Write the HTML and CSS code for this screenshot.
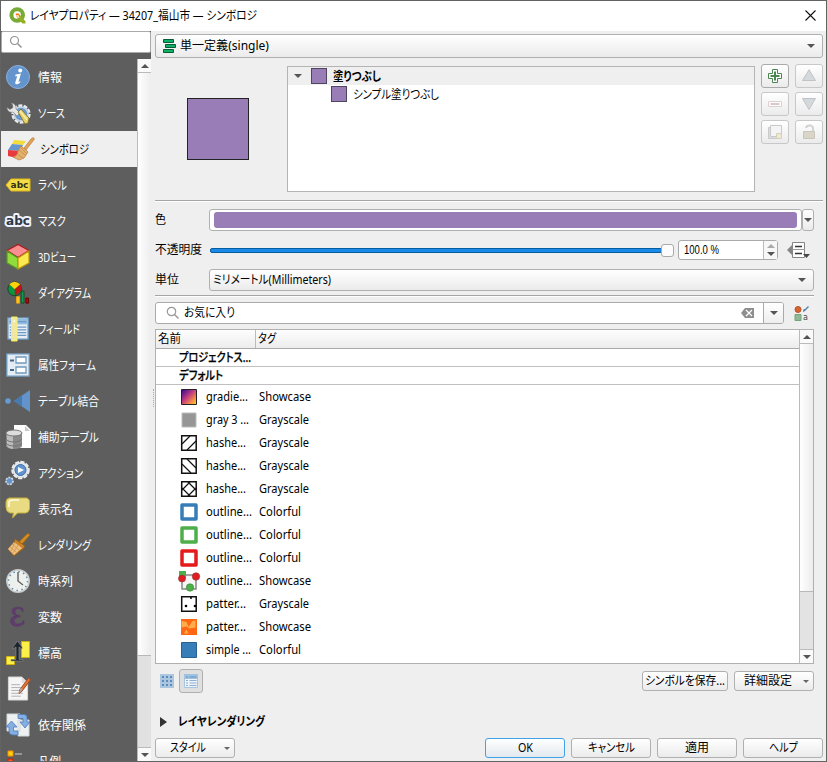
FILE: index.html
```html
<!DOCTYPE html>
<html lang="ja">
<head>
<meta charset="utf-8">
<title>レイヤプロパティ — 34207_福山市 — シンボロジ</title>
<link rel="stylesheet" href="styles.css">
</head>
<body>
<div class="window">
  <header class="titlebar">
    <svg class="logo" viewBox="0 0 18 18" width="18" height="18"><circle cx="8.2" cy="8" r="5.8" fill="none" stroke="#78aa38" stroke-width="4"/><path d="M8 8h3l5.5 6.5v2h-3L8 11z" fill="#93b023"/><path d="M6.5 6.5h3.5l1 2.5-3 1.5z" fill="#ee7913"/><path d="M7 8l2.5 0 1 3h-2z" fill="#f7d9b0"/></svg>
    <span class="fit" data-w="227">レイヤプロパティ — 34207_福山市 — シンボロジ</span>
    <svg class="close" viewBox="0 0 11 11" width="11" height="11"><path d="M.5.5l10 10M10.500.5l-10 10" stroke="#111" stroke-width="1.1"/></svg>
  </header>
  <div class="body">
    <aside class="sidebar">
      <div class="side-search"><svg viewBox="0 0 14 14" width="14" height="14"><circle cx="5.500" cy="5.500" r="4" fill="none" stroke="#949494" stroke-width="1.200"/><path d="M8.500 8.500l4 4" stroke="#949494" stroke-width="1.600"/></svg></div>
      <div class="side-main">
        <nav class="nav">
          <div class="item"><svg viewBox="0 0 24 24"><circle cx="12" cy="12" r="11.500" fill="#6394cd" stroke="#8bb1dc"/><path d="M9.500 9.500l5.500-1-2.600 8.500 2-1-.3 1.600c-2 2.300-5.600 2.500-4.800-.3l2-6.200-2 .3z" fill="#fff"/><circle cx="14.200" cy="5.500" r="2" fill="#fff"/></svg><span class="fit" data-w="24">情報</span></div>
          <div class="item"><svg viewBox="0 0 24 24"><circle cx="15" cy="13" r="8" fill="#6898d0" stroke="#e8ebee" stroke-width="3.300" stroke-dasharray="3.700 1.300"/><circle cx="15" cy="13" r="7" fill="none" stroke="#c6d0da" stroke-width="1.500"/><path d="M5 2a5 5 0 0 1 5 6l4 4-3 3-4-4C4 12 1 10 1 6.500l3 2 3-2-.5-3z" fill="#e6e7e4" stroke="#777" stroke-width=".6"/><path d="M12 11l3-3 8 9-1 5-3 1z" fill="#e3d165" stroke="#776b2f" stroke-width=".8"/><path d="M14 10l7 9" stroke="#f7edaa" stroke-width="1.500"/></svg><span class="fit" data-w="27">ソース</span></div>
          <div class="item selected"><svg viewBox="0 0 26 24" class="wide"><path d="M6 3l12 1-3 4-11-1z" fill="#f3dc38"/><path d="M4 7l11 1-3 6L0 13z" fill="#6497d0"/><path d="M0 13l13 1-4 7-9-2z" fill="#e73b3d"/><path d="M16 11l7-9q2-2 3-1t-1 3l-7 9z" fill="#dfa25a" stroke="#bd7f37" stroke-width=".7"/><path d="M13 9l7 6-4 6-5 2-6-3c4-1 5-4 5-6z" fill="#e5b16e" stroke="#c08340" stroke-width=".8"/><path d="M11 13l7 6M9 17l6 4M13 11l6 6" stroke="#c8944f"/></svg><span class="fit" data-w="49">シンボロジ</span></div>
          <div class="item"><svg viewBox="0 0 24 24"><path d="M5 6h19v12H5l-5-6z" fill="#f5dc42" stroke="#e0b41d"/><text x="13.500" y="15.300" text-anchor="middle" class="abc small">abc</text></svg><span class="fit" data-w="29">ラベル</span></div>
          <div class="item"><svg viewBox="0 0 26 24" class="maskicon"><text x="13" y="16" text-anchor="middle" class="abc outlined">abc</text></svg><span class="fit" data-w="28">マスク</span></div>
          <div class="item"><svg viewBox="0 0 24 24"><path d="M12-.5l11 6-11 7-11-7z" fill="#fa8f91" stroke="#ad191d" stroke-width="1.200"/><path d="M1 6l11 7v11L1 18z" fill="#91dc3b" stroke="#59972a" stroke-width="1.200"/><path d="M23 6l-11 7v11l11-6z" fill="#fce94f" stroke="#b99810" stroke-width="1.200"/></svg><span class="fit" data-w="38">3Dビュー</span></div>
          <div class="item"><svg viewBox="0 0 24 26"><circle cx="8.500" cy="8.500" r="7.500" fill="#069843" stroke="#193f20"/><path d="M8.500 9L2.500 3.500Q8-2 14.500 3.500z" fill="#ffd20a"/><path d="M8.500 9l6-5.500c3 4 1 10-6 12z" fill="#bd1615"/><path d="M10.500 17h3v7h-3z" fill="#fbc519" stroke="#f3a810"/><path d="M15.500 11h3v13h-3z" fill="#109c4c" stroke="#124c29"/><path d="M20.500 18.500h3V24h-3z" fill="#b60704" stroke="#620503"/></svg><span class="fit" data-w="53">ダイアグラム</span></div>
          <div class="item"><svg viewBox="0 0 24 26"><path d="M1 1h22v23H1z" fill="#e7eef6" stroke="#6695bd" stroke-width="1.500"/><path d="M2 2h20v6H2z" fill="#94bce0"/><path d="M3 5h18M3 11h18M3 14h18M3 17h18M3 20h18" stroke="#6c98c5" stroke-width="1.300"/><path d="M5 0h6v26H5z" fill="#eee7a5" stroke="#fcf54e"/><circle cx="8" cy="4.500" r="1" fill="#fff"/></svg><span class="fit" data-w="42">フィールド</span></div>
          <div class="item"><svg viewBox="0 0 24 24"><path d="M.8.8h22.400v22.400H.8z" fill="#e5edf4" stroke="#6a97bc" stroke-width="1.300"/><path d="M4 7.500h4M4 17h4" stroke="#466783" stroke-width="2"/><path d="M10 4h10v6H10zM10 14h10v6H10z" fill="#fff" stroke="#7199bc" stroke-width="1.300"/></svg><span class="fit" data-w="58">属性フォーム</span></div>
          <div class="item"><svg viewBox="0 0 24 24"><circle cx="2" cy="12" r="2.800" fill="#679bd3"/><path d="M8 12L24 1v22z" fill="#6294cb"/><path d="M8 12l8-6v12z" fill="#497aaf"/></svg><span class="fit" data-w="61">テーブル結合</span></div>
          <div class="item"><svg viewBox="0 0 24 24"><path d="M8 0h12l5 5v18H8z" fill="#fff"/><path d="M19 1v5h5z" fill="#c9c9c9"/><path d="M0 8v13c1 4 15 4 16 0V8z" fill="#888"/><path d="M1 8v13c1 2 4 3 6 3V8z" fill="#bcbcbc"/><ellipse cx="8" cy="8" rx="8" ry="3" fill="#ddd" stroke="#777"/><path d="M0 14c2 4 14 4 16 0M0 18c2 4 14 4 16 0" fill="none" stroke="#737373"/></svg><span class="fit" data-w="61">補助テーブル</span></div>
          <div class="item"><svg viewBox="0 0 24 24"><circle cx="14.500" cy="9" r="7.500" fill="#6094cf" stroke="#ecefef" stroke-width="3.500" stroke-dasharray="3.800 1.200"/><circle cx="14.500" cy="9" r="7" fill="none" stroke="#e4e7e9" stroke-width="2"/><circle cx="14.500" cy="9" r="5.500" fill="#6094cf" stroke="#4d79a9"/><path d="M12 6l6 3-6 3z" fill="#fff"/><circle cx="3.500" cy="20" r="3.500" fill="#6497d0" stroke="#d8dbe0" stroke-width="1.700" stroke-dasharray="2 1"/></svg><span class="fit" data-w="45">アクション</span></div>
          <div class="item"><svg viewBox="0 0 24 24"><path d="M3 1h18q3 1 2.500 5v6q-1 4-4 4h-8l-5 5 1-5H4q-4-1-4-6V5q0-3 3-4z" fill="#e8db82" stroke="#c4ad38"/><path d="M3 10V6q0-3 4-3h6" fill="none" stroke="#fffbe0" stroke-width="1.500"/></svg><span class="fit" data-w="35">表示名</span></div>
          <div class="item"><svg viewBox="0 0 24 24"><path d="M13 9l8-8q2-1 3 1l-8 9z" fill="#d58d1d" stroke="#9c6512" stroke-width=".7"/><path d="M9 6l10 7-2 3-3 2-6 5-6-7 6-5z" fill="#ca8326" stroke="#965d19" stroke-width=".8"/><path d="M8 9l8 6-8 7-6-6z" fill="#edc083"/><path d="M6 11l7 6M4 14l6 5M9 9l-4 9M12 12l-5 8" stroke="#cb954b" stroke-width=".8"/></svg><span class="fit" data-w="53">レンダリング</span></div>
          <div class="item"><svg viewBox="0 0 24 24"><circle cx="12" cy="12" r="11.200" fill="#edf1ed" stroke="#c9cccb" stroke-width="1.500"/><circle cx="12" cy="12" r="9.500" fill="none" stroke="#6489b0" stroke-width="1.500" stroke-dasharray="1.500 3.475"/><path d="M12 3v9l5 4" fill="none" stroke="#666" stroke-width="1.500"/></svg><span class="fit" data-w="35">時系列</span></div>
          <div class="item"><svg viewBox="0 0 24 24"><path d="M17 7V3.500C13 1 6 2 6 6c0 3 2 4.500 5 5-4 0-6.500 2-6.500 5 0 6 9 7 13.500 2.500V15c-3 5-9 5.500-10 1 0-3 3-4 6-4v-1.500c-3 0-5-1-5-4 0-4 6-4 8 .5z" fill="#613c70" stroke="#532f60" stroke-width=".4"/></svg><span class="fit" data-w="24">変数</span></div>
          <div class="item"><svg viewBox="0 0 24 24"><path d="M15.500.500h8v16h-8zM.5 15.500h8v8h-8z" fill="#fcf048" stroke="#cfb012"/><path d="M5 20h12v-1.500h-4V6l3 2V6l-4.500-6L7 6v2l3-2v12.500H5z" fill="#1d262c" stroke="#818789" stroke-width=".7"/></svg><span class="fit" data-w="24">標高</span></div>
          <div class="item"><svg viewBox="0 0 24 25"><path d="M2 0h14l6 6v18H2z" fill="#f4f5f4" stroke="#d7d7d4"/><path d="M16 0v6h6" fill="#ddd"/><path d="M5 8h9M5 11h10M5 14h12M5 17h12M5 20h10" stroke="#b0b0b0"/><path d="M23 1l2 2-9 12-3 2 1-4z" fill="#e07131" stroke="#a44b24"/><path d="M15 11l2 2-4 4 1-4z" fill="#aaa"/></svg><span class="fit" data-w="42">メタデータ</span></div>
          <div class="item"><svg viewBox="0 0 24 24"><path d="M1 1h13v17H1zM12 7h11v16H12z" fill="#eef1f1" stroke="#d3d8d9"/><path d="M12 1.500h6q3 0 3 3V9h3l-5 6-5-6h3V5.500h-5z" fill="#84aee4" stroke="#4c7eb8" stroke-width=".8"/><path d="M12 22H7q-4 0-4-4v-4H0l5.500-6 5.500 6H7.500v4H12z" fill="#84aee4" stroke="#4c7eb8" stroke-width=".8"/></svg><span class="fit" data-w="48">依存関係</span></div>
          <div class="item"><svg viewBox="0 0 24 24"><path d="M2 2h5v5H2z" fill="#ffd500" stroke="#f28b12"/><path d="M2 10h5v5H2z" fill="#f75c22" stroke="#bb2100"/><path d="M9 5h7" stroke="#aaa" stroke-width="1.500"/></svg><span class="fit" data-w="23">凡例</span></div>
        </nav>
        <div class="scroll side-scroll"><i class="up"></i><b></b><em></em><i class="down"></i></div>
      </div>
    </aside>
    <main class="main">
      <div class="combo renderer"><svg viewBox="0 0 13 15" width="13" height="15"><path d="M.5.500h10v3H.5zM2.500 5.500h10v3h-10zM.5 10.500h10v3H.5z" fill="#0eb266" stroke="#075b36"/></svg><span class="fit" data-w="89">単一定義(single)</span><span class="arrow"></span></div>
      <section class="symbol">
        <div class="preview"></div>
        <div class="tree">
          <div class="tree-row root"><span class="arrow"></span><span class="swatch"></span><strong class="fit" data-w="48">塗りつぶし</strong></div>
          <div class="tree-row child"><span class="swatch"></span><span class="fit" data-w="86">シンプル塗りつぶし</span></div>
        </div>
        <div class="tools">
          <span class="btn on"><svg viewBox="0 0 14 14"><path d="M4.500.5h5v4h4v5h-4v4h-5v-4h-4v-5h4z" fill="#fff" stroke="#4b8552"/><path d="M7 2.500v9M2.500 7h9" stroke="#4b8552" stroke-width="2"/></svg></span>
          <span class="btn"><svg viewBox="0 0 14 14"><path d="M7 .8L13.500 11.500H.5z" fill="#d5d9db" stroke="#c0c3c5"/></svg></span>
          <span class="btn"><svg viewBox="0 0 14 14"><path d="M.5 4.500h13v5H.5z" fill="#fff" stroke="#dfd1d1"/><path d="M2.500 7h9" stroke="#d9c9c9" stroke-width="2"/></svg></span>
          <span class="btn"><svg viewBox="0 0 14 14"><path d="M7 12.500L13.500 1.500H.5z" fill="#d5d9db" stroke="#c0c3c5"/></svg></span>
          <span class="btn"><svg viewBox="0 0 14 14"><path d="M.5 2.500h9v11h-9z" fill="#ddd" stroke="#c9c9c9"/><path d="M2.500.5h11v11h-11z" fill="#f4f4f4" stroke="#c9c9c9"/><path d="M8.500 8.500h5v5h-5z" fill="#eee9d4" stroke="#d5d0be"/></svg></span>
          <span class="btn"><svg viewBox="0 0 14 14"><path d="M4 3c1-4 8-3 7 1v2" fill="none" stroke="#d0d2d3" stroke-width="2"/><path d="M1.500 6.500h11v7h-11z" fill="#d9d6c9" stroke="#c9c6b9"/></svg></span>
        </div>
      </section>
      <hr class="full">
      <section class="props">
        <div class="prop color"><label><span class="fit" data-w="11">色</span></label><div class="colorbar"><span></span></div><div class="drop"><span class="arrow"></span></div></div>
        <div class="prop opacity"><label><span class="fit" data-w="47">不透明度</span></label><div class="slider"><span class="track"></span><span class="handle"></span></div><div class="spin"><span class="fit" data-w="35">100.0 %</span><div class="steps"><span class="arrow upward"></span><span class="arrow"></span></div></div>
          <svg class="override" viewBox="0 0 24 18" width="24" height="18"><path d="M0 8l6-6v12z" fill="#858585"/><path d="M5.500.5h12v15h-12z" fill="#fff" stroke="#858585"/><path d="M5 7.500h13" stroke="#999"/><path d="M8 4.500h7M8 11.500h7" stroke="#333" stroke-width="1.500"/><path d="M16 12h7l-3.500 4z" fill="#484848"/></svg></div>
        <div class="prop unit"><label><span class="fit" data-w="24">単位</span></label><div class="combo"><span class="fit" data-w="118">ミリメートル(Millimeters)</span><span class="arrow"></span></div></div>
      </section>
      <hr>
      <div class="searchrow">
        <div class="search"><svg viewBox="0 0 14 14" width="14" height="14"><circle cx="5.500" cy="5.500" r="4.200" fill="none" stroke="#999" stroke-width="1.200"/><path d="M8.500 8.500l4 4" stroke="#999" stroke-width="1.500"/></svg><span class="fit" data-w="51">お気に入り</span>
          <svg class="clear" viewBox="0 0 13 10" width="13" height="10"><path d="M0 5l4-5h9v10H4z" fill="#8e8e8e"/><path d="M5 2l6 6M11 2L5 8" stroke="#fff" stroke-width="1.200"/></svg><div class="search-drop"><span class="arrow"></span></div></div>
        <svg class="style-icon" viewBox="0 0 16 15" width="16" height="15"><circle cx="4" cy="3.500" r="3" fill="#d9632f" stroke="#b65327"/><path d="M9 6c0-3 1-3 2-3l3-3 1 1-4 4z" fill="#5384ac"/><path d="M1 8.500h6v6H1z" fill="#91ba94" stroke="#72a477"/><text x="9" y="13.500" class="style-letter">a</text></svg>
      </div>
      <div class="table">
        <div class="table-body">
          <div class="head"><span><span class="fit" data-w="23">名前</span></span><span><span class="fit" data-w="18">タグ</span></span></div>
          <div class="group"><span class="fit" data-w="72">プロジェクトス...</span></div>
          <div class="group"><span class="fit" data-w="44">デフォルト</span></div>
          <div class="row"><svg viewBox="0 0 18 18"><defs><linearGradient id="plasma" x2="1" y2="1"><stop stop-color="#2c0594"/><stop offset=".45" stop-color="#c23e7f"/><stop offset=".75" stop-color="#f68d45"/><stop offset="1" stop-color="#f9dc25"/></linearGradient></defs><path d="M1.500 1.500h15v15h-15z" fill="url(#plasma)" stroke="#222"/></svg><span class="fit" data-w="42">gradie...</span><span class="fit" data-w="52">Showcase</span></div>
          <div class="row"><svg viewBox="0 0 18 18"><path d="M2 2h14v14H2z" fill="#969696" stroke="#bbb"/></svg><span class="fit" data-w="43">gray 3 ...</span><span class="fit" data-w="50">Grayscale</span></div>
          <div class="row"><svg viewBox="0 0 18 18"><path d="M1.700 1.700h14.500v14.500H1.700z" class="box"/><path d="M2 10l8-8M7 16l9-9" class="thin"/></svg><span class="fit" data-w="40">hashe...</span><span class="fit" data-w="50">Grayscale</span></div>
          <div class="row"><svg viewBox="0 0 18 18"><path d="M1.700 1.700h14.500v14.500H1.700z" class="box"/><path d="M2 7l9 9M7 2l9 9" class="thin"/></svg><span class="fit" data-w="40">hashe...</span><span class="fit" data-w="50">Grayscale</span></div>
          <div class="row"><svg viewBox="0 0 18 18"><path d="M1.700 1.700h14.500v14.500H1.700z" class="box"/><path d="M2 8l8 8M8 2l8 8M2 10l8-8M8 16l8-8" class="thin"/></svg><span class="fit" data-w="40">hashe...</span><span class="fit" data-w="50">Grayscale</span></div>
          <div class="row"><svg viewBox="0 0 18 18"><rect x="2" y="2" width="14" height="14" class="ring blue"/></svg><span class="fit" data-w="46">outline...</span><span class="fit" data-w="42">Colorful</span></div>
          <div class="row"><svg viewBox="0 0 18 18"><rect x="2" y="2" width="14" height="14" class="ring green"/></svg><span class="fit" data-w="46">outline...</span><span class="fit" data-w="42">Colorful</span></div>
          <div class="row"><svg viewBox="0 0 18 18"><rect x="2" y="2" width="14" height="14" class="ring red"/></svg><span class="fit" data-w="46">outline...</span><span class="fit" data-w="42">Colorful</span></div>
          <div class="row"><svg viewBox="0 0 18 18"><path d="M2 3h14v14H2z" fill="#f5f5f5" stroke="#888" stroke-width="1.500"/><path d="M-1-1h7v7h-7z" fill="#4caf47"/><circle cx="2" cy="6.500" r="3.500" fill="#e31b22" stroke="#963a38" stroke-width=".7"/><circle cx="16" cy="4.500" r="3.700" fill="#e31b22" stroke="#963a38" stroke-width=".7"/><circle cx="10" cy="15.500" r="3.700" fill="#4caf47" stroke="#398d38" stroke-width=".7"/></svg><span class="fit" data-w="46">outline...</span><span class="fit" data-w="52">Showcase</span></div>
          <div class="row"><svg viewBox="0 0 18 18"><path d="M1.700 1.700h14.500v14.500H1.700z" class="box"/><circle cx="6" cy="11" r="1.300"/><circle cx="15" cy="11" r="1.300"/><circle cx="11" cy="3" r="1"/></svg><span class="fit" data-w="40">patter...</span><span class="fit" data-w="50">Grayscale</span></div>
          <div class="row"><svg viewBox="0 0 18 18"><path d="M1 1h16v16H1z" fill="#ff6712"/><path d="M1.500 3l5 1 2 5 4-6 3-.5v7l-6 1-3-2-5 1zM4 15.500l2.500-4 2 4z" fill="#ffac4a"/></svg><span class="fit" data-w="40">patter...</span><span class="fit" data-w="52">Showcase</span></div>
          <div class="row"><svg viewBox="0 0 18 18"><path d="M1.500 1.500h15v15h-15z" fill="#377eb8" stroke="#286090"/></svg><span class="fit" data-w="45">simple ...</span><span class="fit" data-w="42">Colorful</span></div>
        </div>
        <div class="scroll table-scroll"><i class="up"></i><b></b><em></em><i class="down"></i></div>
      </div>
      <div class="views">
        <svg viewBox="0 0 14 14" width="14" height="14"><path d="M0 0h14v14H0z" fill="#acc6e0"/><path d="M2 2h2v2H2zM6 2h2v2H6zM10 2h2v2h-2zM2 6h2v2H2zM6 6h2v2H6zM10 6h2v2h-2zM2 10h2v2H2zM6 10h2v2H6zM10 10h2v2h-2z" fill="#5b8abb"/></svg>
        <span class="toggle"><svg viewBox="0 0 14 14" width="14" height="14"><path d="M.5.500h13v13H.5z" fill="#edf3f8" stroke="#a6c5e2"/><path d="M0 0h14v5H0z" fill="#a0c2e2"/><path d="M2 3h2M5.500 3h7" stroke="#5f91bd" stroke-width="1.200"/><path d="M2 6.500h2M5.500 6.500h7M2 9h2M5.500 9h7M2 11.500h2M5.500 11.500h7" stroke="#8eafd0"/></svg></span>
        <span class="push save"><span class="fit" data-w="80">シンボルを保存...</span></span>
        <span class="push adv"><span class="fit" data-w="48">詳細設定</span><span class="arrow tiny"></span></span>
      </div>
      <div class="rendering"><span class="triangle"></span><strong class="fit" data-w="87">レイヤレンダリング</strong></div>
      <footer class="actions">
        <span class="push style"><span class="fit" data-w="36">スタイル</span><span class="arrow tiny"></span></span>
        <span class="push ok"><span class="fit" data-w="15">OK</span></span>
        <span class="push"><span class="fit" data-w="47">キャンセル</span></span>
        <span class="push"><span class="fit" data-w="24">適用</span></span>
        <span class="push"><span class="fit" data-w="29">ヘルプ</span></span>
      </footer>
      <span class="grip"></span>
    </main>
  </div>
</div>
<script src="fit.js"></script>
</body>
</html>
```
FILE: styles.css
```css
* { box-sizing: border-box; }
body { margin: 0; font: 12px/18px "Noto Sans", "Noto Sans CJK JP", sans-serif; color: #000; }
svg { display: block; flex: none; overflow: visible; }
.fit { display: inline-block; white-space: nowrap; flex: none; transform-origin: 0 50%; font-feature-settings: "palt"; }
.window { width: 827px; height: 762px; border: 1px solid #636363; background: #efefef; display: flex; flex-direction: column; overflow: hidden; }
.titlebar { height: 30px; flex: none; background: #fff; display: flex; align-items: center; padding: 0 10px 1px 8px; }
.logo { margin-right: 3px; }
.close { margin-left: auto; }
.body { display: flex; flex: 1; min-height: 0; }
.sidebar { width: 150px; flex: none; background: #5e5e5e; display: flex; flex-direction: column; }
.side-search { height: 22px; flex: none; background: #fff; border: 1px solid #aaa; border-radius: 2px; padding: 3px 7px; }
.side-main { display: flex; flex: 1; margin-top: 6px; min-height: 0; }
.nav { flex: 1; overflow: hidden; color: #fff; }
.item { height: 36px; display: flex; align-items: center; padding-left: 5px; gap: 8px; }
.item .fit { margin-top: 2px; }
.item svg { width: 24px; height: 24px; }
.item svg.wide { width: 26px; margin-left: 2px; margin-right: -2px; }
.item svg.maskicon { width: 26px; margin: 0 -1px; }
.item.selected { background: #efefef; color: #000; }
.abc { font: bold 10px "DejaVu Sans", sans-serif; fill: #333019; }
.abc.small { font-size: 9px; }
.abc.outlined { font-size: 12px; stroke: #edf2ff; stroke-width: 4px; paint-order: stroke; stroke-linejoin: round; fill: #303641; }
.scroll { width: 14px; flex: none; display: flex; flex-direction: column; background: #e3e3e3; border-left: 1px solid #bababa; }
.scroll b { background: linear-gradient(90deg, #fff, #ededed); }
.scroll em { flex: 1; border-top: 1px solid #b8b8b8; }
.scroll i { height: 14px; flex: none; display: grid; place-items: center; background: #fafafa; border-bottom: 1px solid #bbb; }
.scroll i::after { content: ""; border: 4px solid transparent; border-top: 0; border-bottom: 4px solid #555; }
.scroll i.down { border: 0; border-top: 1px solid #bbb; }
.scroll i.down::after { border-bottom: 0; border-top: 4px solid #555; }
.side-scroll b { height: 582px; flex: none; }
.side-scroll em { background: #e1e1e1; }
.main { position: relative; flex: 1; min-width: 0; padding: 3px 3px 0 4px; display: flex; flex-direction: column; }
.combo, .push, .btn, .drop { border: 1px solid #b0b0b0; border-radius: 3px; background: linear-gradient(#fff, #ebebeb); }
.arrow { width: 0; height: 0; flex: none; border: 4px solid transparent; border-top-color: #555; border-bottom: 0; }
.arrow.upward { border-bottom: 4px solid #aaa; border-top: 0; }
.arrow.tiny { border-width: 3px 3px 0; border-top-color: #666; }
.combo { display: flex; align-items: center; }
.combo .arrow { margin-left: auto; margin-right: 7px; }
.renderer { height: 24px; flex: none; padding-left: 7px; gap: 4px; }
.symbol { height: 142px; flex: none; display: flex; align-items: flex-start; }
.preview { width: 62px; height: 62px; margin: 40px 38px 0 32px; background: #987db7; border: 1px solid #232323; flex: none; }
.tree { width: 468px; height: 126px; margin-top: 8px; border: 1px solid #b4b4b4; background: #fff; flex: none; }
.tree-row { height: 18px; display: flex; align-items: center; }
.tree-row .fit { margin-top: 1px; }
.root { background: #efefef; padding-left: 6px; }
.root .swatch { margin: 0 6px 0 9px; }
.child { padding-left: 43px; gap: 6px; }
.swatch { width: 16px; height: 16px; flex: none; background: #987db7; border: 1px solid #504560; }
.tools { display: grid; grid-template-columns: 28px 28px; grid-auto-rows: 24px; gap: 4px 6px; margin: 6px 0 0 6px; }
.btn { display: grid; place-items: center; border-color: #c8c8c8; }
.btn svg { width: 14px; height: 14px; }
.btn.on { border-color: #aaa; }
hr { width: 659px; height: 2px; flex: none; border: 0; margin: 0; background: #a5a5a5; border-bottom: 1px solid #fff; }
hr.full { width: 668px; }
.props { height: 93px; flex: none; padding-top: 7px; }
.prop { display: flex; align-items: center; width: 659px; }
.prop label { width: 54px; flex: none; display: flex; }
.color { height: 22px; }
.colorbar { width: 593px; height: 22px; border: 1px solid #b0b0b0; border-radius: 3px; background: #fff; padding: 2px 4px; }
.colorbar span { display: block; height: 16px; border-radius: 3px; background: #987db7; }
.drop { width: 12px; height: 22px; display: grid; place-items: center; }
.opacity { height: 20px; margin-top: 9px; }
.slider { display: flex; align-items: center; width: 469px; padding-left: 1px; }
.track { width: 452px; height: 5px; background: #198ae8; border: 1px solid #075b9f; border-radius: 2px; }
.handle { width: 13px; height: 13px; margin-left: -1px; border: 1px solid #aaa; border-radius: 3px; background: #fcfcfc; }
.spin { display: flex; align-items: center; width: 100px; height: 20px; padding-left: 5px; border: 1px solid #aaa; border-radius: 3px; background: #fff; font-family: "Liberation Sans", sans-serif; }
.steps { width: 14px; height: 18px; margin-left: auto; border-left: 1px solid #bbb; background: #f7f7f7; display: flex; flex-direction: column; justify-content: center; align-items: center; gap: 4px; }
.override { margin-left: 9px; margin-top: 2px; }
.unit { height: 22px; margin-top: 9px; }
.unit .combo { width: 605px; height: 22px; padding-left: 3px; }
.searchrow { display: flex; align-items: center; height: 22px; margin-top: 5px; flex: none; }
.search { width: 629px; height: 22px; display: flex; align-items: center; border: 1px solid #aaa; border-radius: 3px; background: #fff; padding-left: 10px; gap: 4px; }
.clear { margin-left: auto; }
.search-drop { width: 20px; height: 20px; margin-left: 5px; display: grid; place-items: center; border-left: 1px solid #aaa; background: linear-gradient(#fff, #eee); border-radius: 0 2px 2px 0; }
.style-icon { margin-left: 10px; }
.style-letter { font: 8px "DejaVu Sans", sans-serif; fill: #444; }
.table { width: 659px; height: 335px; margin-top: 5px; flex: none; display: flex; border: 1px solid #b0b0b0; background: #fff; }
.table-body { flex: 1; }
.head { height: 19px; display: grid; grid-template-columns: 99px 1fr; background: linear-gradient(#fefefe, #ececec); border-bottom: 1px solid #aaa; }
.head > span { padding-left: 2px; }
.head > span + span { border-left: 1px solid #bbb; }
.group { height: 18px; border-bottom: 1px solid #c0c0c0; padding-left: 23px; font-weight: 500; -webkit-text-stroke: .25px #000; }
.row { height: 23px; display: grid; grid-template-columns: 18px 61px auto; justify-content: start; align-items: center; padding-left: 24px; }
.row svg { width: 18px; height: 18px; }
.row svg + .fit { margin-left: 8px; }
.row .fit { justify-self: start; }
.box { fill: #fff; stroke: #111; stroke-width: 1.5; }
.thin { stroke: #111; stroke-width: 1.2; }
.ring { fill: #fff; stroke-width: 3.500px; stroke-linejoin: round; }
.blue { stroke: #377eb8; }
.green { stroke: #4daf4a; }
.red { stroke: #e41a1c; }
.table-scroll b { height: 247px; flex: none; }
.views { height: 24px; width: 659px; flex: none; margin-top: 5px; display: flex; align-items: center; padding-left: 5px; }
.toggle { width: 24px; height: 24px; margin-left: 5px; border: 1px solid #b0b0b0; border-radius: 3px; background: #dfdfdf; display: grid; place-items: center; }
.push { display: flex; align-items: center; justify-content: center; width: 80px; height: 20px; flex: none; }
.save { width: 86px; margin-left: auto; margin-right: 6px; }
.adv { gap: 11px; padding-left: 5px; }
.rendering { height: 45px; flex: none; padding: 14px 0 0 5px; display: flex; align-items: center; margin-top: -1px; }
.triangle { border: 5px solid transparent; border-left: 7px solid #333; border-right: 0; margin-right: 11px; }
.actions { display: flex; gap: 6px; margin-top: 1px; }
.style { margin-right: auto; gap: 18px; padding-left: 10px; }
.ok { border-color: #41a2e7; background: linear-gradient(#fff, #e2e9ef); }
.grip { position: absolute; left: 2px; top: 358px; height: 18px; border-left: 1px dotted #aaa; }
```
FILE: fit.js
```js
// Condense each label to its column width.
document.querySelectorAll('.fit').forEach(el => {
  const target = Number(el.dataset.w);
  const natural = el.getBoundingClientRect().width;
  el.style.transform = `scaleX(${target / natural})`;
  el.style.marginRight = `${target - natural}px`;
});
```
